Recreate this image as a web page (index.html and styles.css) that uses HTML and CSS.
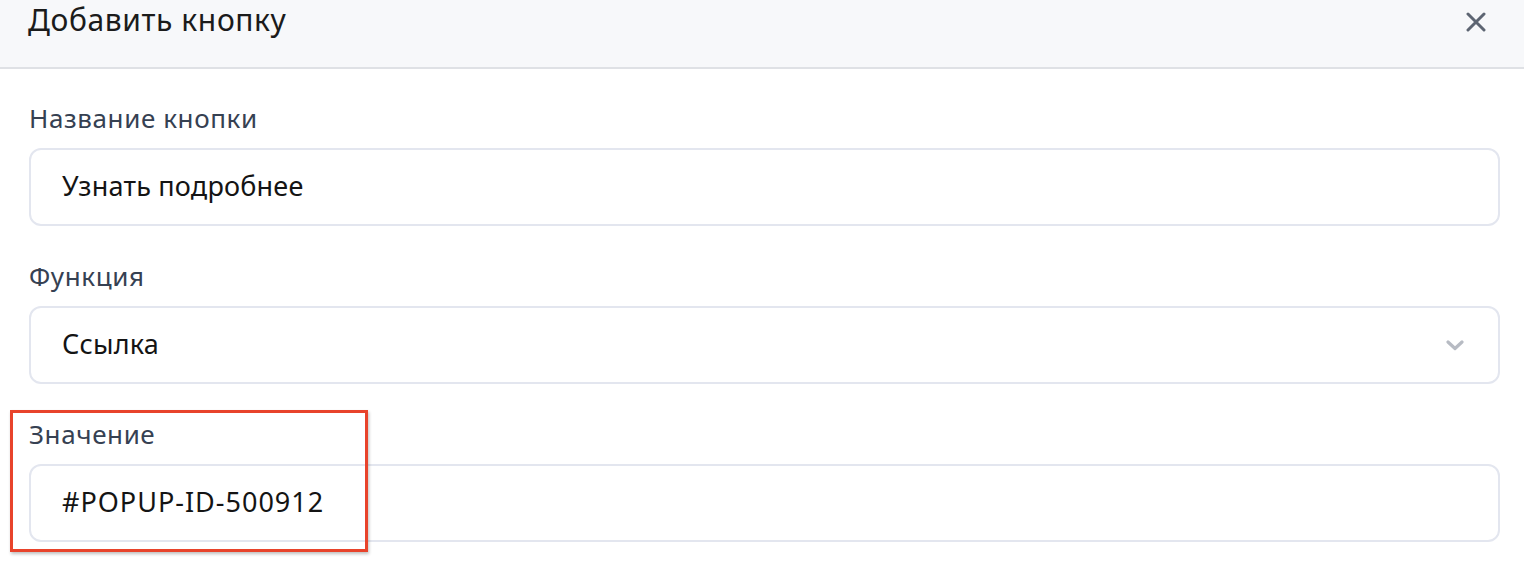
FILE: index.html
```html
<!DOCTYPE html>
<html lang="ru">
<head>
<meta charset="utf-8">
<title>Добавить кнопку</title>
<link rel="stylesheet" href="styles.css">
</head>
<body>
<div class="modal">
  <div class="modal-header">
    <h2 class="modal-title">Добавить кнопку</h2>
    <button class="close-btn" aria-label="Закрыть">
      <svg width="20" height="20" viewBox="0 0 20 20"><path d="M2 2 L18 18 M18 2 L2 18" stroke="#5d6572" stroke-width="3" stroke-linecap="round" fill="none"/></svg>
    </button>
  </div>
  <div class="modal-body">
    <div class="field">
      <label class="field-label">Название кнопки</label>
      <div class="input">Узнать подробнее</div>
    </div>
    <div class="field">
      <label class="field-label">Функция</label>
      <div class="input select">
        <span>Ссылка</span>
        <svg class="chevron" width="18" height="11" viewBox="0 0 18 11"><path d="M2 2 L9 8.5 L16 2" stroke="#b7bbc3" stroke-width="3.2" stroke-linecap="round" stroke-linejoin="round" fill="none"/></svg>
      </div>
    </div>
    <div class="field highlighted">
      <label class="field-label">Значение</label>
      <div class="input code">#POPUP-ID-500912</div>
      <div class="annotation"></div>
    </div>
  </div>
</div>
</body>
</html>
```
FILE: styles.css
```css
* { box-sizing: border-box; }
html, body { margin: 0; padding: 0; background: #ffffff; }
body { font-family: "Noto Sans", "Open Sans", sans-serif; }

.modal { width: 1524px; min-height: 564px; }

.modal-header {
  height: 69px;
  background: #f7f8fa;
  border-bottom: 2px solid #dfe1e5;
  display: flex;
  align-items: flex-start;
  justify-content: space-between;
  padding: 0 28px 0 28px;
}
.modal-title {
  margin: 0;
  font-weight: 400;
  font-size: 30px;
  letter-spacing: 0.6px;
  line-height: 40px;
  color: #1b1b1b;
}
.close-btn {
  margin-top: 12px;
  margin-right: 10px;
  padding: 0;
  border: 0;
  background: transparent;
  width: 20px;
  height: 20px;
  display: flex;
}

.modal-body {
  padding: 35px 24px 22px 29px;
  display: flex;
  flex-direction: column;
  gap: 36px;
}

.field { display: flex; flex-direction: column; gap: 12px; position: relative; }
.field-label {
  font-size: 26px;
  letter-spacing: 0.6px;
  line-height: 28px;
  padding-bottom: 4px;
  color: #364152;
}
.input {
  height: 78px;
  border: 2px solid #e3e6ef;
  border-radius: 12px;
  padding: 0 30px 3px 31px;
  display: flex;
  align-items: center;
  font-size: 27px;
  letter-spacing: 0.2px;
  color: #141414;
  background: #fff;
}
.code { letter-spacing: 1px; }
.select { justify-content: space-between; padding-right: 34px; }
.chevron { display: block; margin-top: 3px; }

.annotation {
  position: absolute;
  left: -19px;
  top: -10px;
  width: 358px;
  height: 142px;
  border: 3px solid #e8432b;
  box-shadow: 1px 2px 3px rgba(0,0,0,0.25);
  pointer-events: none;
}
```
